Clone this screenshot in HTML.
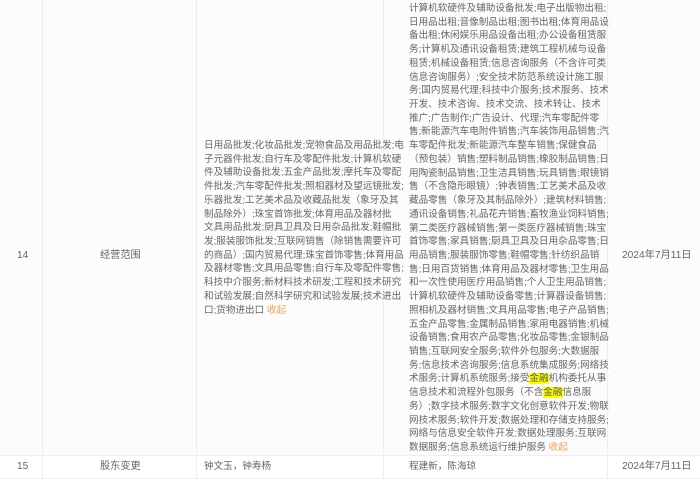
<!DOCTYPE html>
<html><head><meta charset="utf-8"><style>
body{margin:0;width:700px;height:481px;background:#fff;overflow:hidden;position:relative;font-family:"Liberation Sans","Noto Sans CJK SC",sans-serif;font-size:9.6px;color:#666;}
.row14{position:absolute;left:0;top:0;width:700px;height:455px;background:#fcfcfc;border-bottom:1px solid #eee;}
.row15{position:absolute;left:0;top:456px;width:700px;height:22px;border-bottom:1px solid #eee;}
.v{position:absolute;top:0;width:1px;height:479px;background:#eee;}
.t{position:absolute;white-space:nowrap;line-height:13.72px;}
.d{font-size:10.2px;}
.hl{background:#ffff00;color:#555;}
.o{color:#f5a05a;}
</style></head><body>
<div class="row14"></div><div class="row15"></div>
<div class="v" style="left:42px"></div>
<div class="v" style="left:196px"></div>
<div class="v" style="left:383px"></div>
<div class="v" style="left:607px"></div>
<div class="t d" style="left:17px;top:249px">14</div>
<div class="t d" style="left:100px;top:249px">经营范围</div>
<div class="t d" style="left:622px;top:249px">2024年7月11日</div>
<div class="t" style="left:204px;top:139px">日用品批发;化妆品批发;宠物食品及用品批发;电<br>子元器件批发;自行车及零配件批发;计算机软硬<br>件及辅助设备批发;五金产品批发;摩托车及零配<br>件批发;汽车零配件批发;照相器材及望远镜批发;<br>乐器批发;工艺美术品及收藏品批发（象牙及其<br>制品除外）;珠宝首饰批发;体育用品及器材批<br>文具用品批发;厨具卫具及日用杂品批发;鞋帽批<br>发;服装服饰批发;互联网销售（除销售需要许可<br>的商品）;国内贸易代理;珠宝首饰零售;体育用品<br>及器材零售;文具用品零售;自行车及零配件零售;<br>科技中介服务;新材料技术研发;工程和技术研究<br>和试验发展;自然科学研究和试验发展;技术进出<br>口;货物进出口 <span class="o">收起</span></div>
<div class="t" style="left:409px;top:2px">计算机软硬件及辅助设备批发;电子出版物出租;<br>日用品出租;音像制品出租;图书出租;体育用品设<br>备出租;休闲娱乐用品设备出租;办公设备租赁服<br>务;计算机及通讯设备租赁;建筑工程机械与设备<br>租赁;机械设备租赁;信息咨询服务（不含许可类<br>信息咨询服务）;安全技术防范系统设计施工服<br>务;国内贸易代理;科技中介服务;技术服务、技术<br>开发、技术咨询、技术交流、技术转让、技术<br>推广;广告制作;广告设计、代理;汽车零配件零<br>售;新能源汽车电附件销售;汽车装饰用品销售;汽<br>车零配件批发;新能源汽车整车销售;保健食品<br>（预包装）销售;塑料制品销售;橡胶制品销售;日<br>用陶瓷制品销售;卫生洁具销售;玩具销售;眼镜销<br>售（不含隐形眼镜）;钟表销售;工艺美术品及收<br>藏品零售（象牙及其制品除外）;建筑材料销售;<br>通讯设备销售;礼品花卉销售;畜牧渔业饲料销售;<br>第二类医疗器械销售;第一类医疗器械销售;珠宝<br>首饰零售;家具销售;厨具卫具及日用杂品零售;日<br>用品销售;服装服饰零售;鞋帽零售;针纺织品销<br>售;日用百货销售;体育用品及器材零售;卫生用品<br>和一次性使用医疗用品销售;个人卫生用品销售;<br>计算机软硬件及辅助设备零售;计算器设备销售;<br>照相机及器材销售;文具用品零售;电子产品销售;<br>五金产品零售;金属制品销售;家用电器销售;机械<br>设备销售;食用农产品零售;化妆品零售;金银制品<br>销售;互联网安全服务;软件外包服务;大数据服<br>务;信息技术咨询服务;信息系统集成服务;网络技<br>术服务;计算机系统服务;接受<span class="hl">金融</span>机构委托从事<br>信息技术和流程外包服务（不含<span class="hl">金融</span>信息服<br>务）;数字技术服务;数字文化创意软件开发;物联<br>网技术服务;软件开发;数据处理和存储支持服务;<br>网络与信息安全软件开发;数据处理服务;互联网<br>数据服务;信息系统运行维护服务 <span class="o">收起</span></div>
<div class="t d" style="left:17px;top:460px">15</div>
<div class="t d" style="left:100px;top:460px">股东变更</div>
<div class="t" style="left:204px;top:460px">钟文玉，钟寿杨</div>
<div class="t" style="left:409px;top:460px">程建新，陈海琼</div>
<div class="t d" style="left:622px;top:460px">2024年7月11日</div>
</body></html>
